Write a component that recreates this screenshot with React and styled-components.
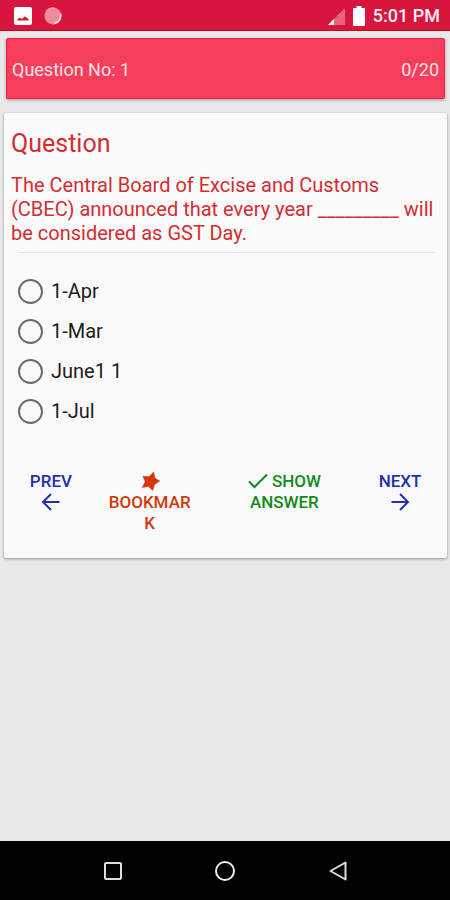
import React, { useState } from "react";
import styled, { createGlobalStyle } from "styled-components";

const GlobalStyle = createGlobalStyle`
  * {
    box-sizing: border-box;
  }

  body {
    margin: 0;
    background: #e8e8e8;
    font-family: Roboto, "Liberation Sans", sans-serif;
  }

  p, h1 {
    margin: 0;
  }
`;

const Screen = styled.div`
  display: flex;
  flex-direction: column;
  min-height: 100vh;
`;

const StatusBar = styled.header`
  display: flex;
  align-items: center;
  justify-content: space-between;
  height: 31px;
  padding: 2px 10px 0 14px;
  background: #d8153c;
  border-bottom: 1px solid #d0020f;
  color: #fff;
`;

const StatusGroup = styled.div`
  display: flex;
  align-items: center;
  gap: ${({ $gap }) => $gap};
`;

const Clock = styled.time`
  font-size: 18px;
  line-height: 24px;
  font-weight: 500;
  color: #fff0f2;
`;

const Content = styled.main`
  flex: 1;
  display: flex;
  flex-direction: column;
  gap: 14px;
  padding: 7px 3px 0 4px;
`;

const Summary = styled.section`
  display: flex;
  align-items: center;
  justify-content: space-between;
  height: 61px;
  margin: 0 2px;
  padding: 2px 5px 0;
  border: 1px solid #ee2450;
  border-radius: 2px;
  background: #f73d5c;
  box-shadow: 0 1px 3px rgba(0, 0, 0, 0.35);
  font-size: 18px;
  line-height: 24px;
  color: #ffe3e6;
`;

const Card = styled.section`
  padding: 16px 7px 24px;
  border-radius: 2px;
  background: #fafafa;
  box-shadow: 0 1px 3px rgba(0, 0, 0, 0.4);
`;

const Title = styled.h1`
  font-size: 25px;
  line-height: 30px;
  font-weight: 400;
  color: #d22d32;
`;

const QuestionText = styled.p`
  margin-top: 14px;
  font-size: 20px;
  line-height: 24px;
  color: #d22d32;
`;

const Divider = styled.hr`
  height: 1px;
  margin: 7px 5px 0 7px;
  border: 0;
  background: #e4e4e4;
`;

const Options = styled.div`
  display: flex;
  flex-direction: column;
  padding: 18px 7px 0;
`;

const Option = styled.label`
  display: flex;
  align-items: center;
  gap: 8px;
  height: 40px;
  font-size: 20px;
  line-height: 24px;
  color: #1c1c1c;
`;

const Radio = styled.input`
  appearance: none;
  width: 25px;
  height: 25px;
  margin: 0;
  border: 2px solid #6a6a6a;
  border-radius: 50%;

  &:checked {
    background: #d8153c;
    box-shadow: inset 0 0 0 4px #fafafa;
  }
`;

const Actions = styled.div`
  display: grid;
  grid-template-columns: 80fr 118fr 152fr 80fr;
  justify-items: center;
  align-items: start;
  margin-top: 40px;
`;

const ActionButton = styled.button`
  max-width: 100px;
  padding: 0 8px;
  border: 0;
  background: none;
  font-family: inherit;
  font-size: 17px;
  line-height: 21px;
  font-weight: 500;
  color: ${({ $color }) => $color};
  overflow-wrap: anywhere;
  cursor: pointer;

  svg {
    vertical-align: ${({ $inline }) => ($inline ? "-4px" : "top")};
    display: ${({ $inline }) => ($inline ? "inline" : "block")};
    margin: ${({ $inline }) => ($inline ? "0" : "0 auto")};
  }
`;

const NavBar = styled.nav`
  display: grid;
  grid-template-columns: repeat(3, 1fr);
  align-items: center;
  height: 59px;
  padding: 0 12.5%;
  background: #000;
`;

const NavButton = styled.button`
  display: flex;
  justify-content: center;
  padding: 0;
  border: 0;
  background: none;
  cursor: pointer;
`;

const PictureIcon = () => (
  <svg width="18" height="18" viewBox="0 0 18 18">
    <rect width="18" height="18" rx="2" fill="#fff" />
    <path d="M3.5 13.5v-1.5l2.5-1.5 2.2 1.5 2.6-2.8 3.7 2.8v1.5z" fill="#c9202f" />
  </svg>
);

const SyncIcon = () => (
  <svg width="18" height="18" viewBox="0 0 18 18">
    <circle cx="9" cy="9" r="8.5" fill="#ee8a9c" />
    <path d="M16.4 7a8 8 0 0 1-6.4 9.6" fill="none" stroke="#ffe0e2" strokeWidth="1.8" />
    <path d="M2 5a8 8 0 0 1 9-3.6" fill="none" stroke="#f4a9b5" strokeWidth="1.2" />
  </svg>
);

const SignalIcon = () => (
  <svg width="17" height="17" viewBox="0 0 17 17">
    <path d="M17 0v17H0z" fill="#e8647d" />
    <path d="M6 11v6H0z" fill="#fff" />
  </svg>
);

const BatteryIcon = () => (
  <svg width="12" height="20" viewBox="0 0 12 20">
    <path d="M3.5 0h5v2H11a1 1 0 0 1 1 1v16a1 1 0 0 1-1 1H1a1 1 0 0 1-1-1V3a1 1 0 0 1 1-1h2.5z" fill="#fff" />
  </svg>
);

const ArrowIcon = ({ right }) => (
  <svg width="20" height="20" viewBox="0 0 20 20" fill="none" stroke="currentColor" strokeWidth="2">
    <path d={right ? "M1.5 10h16M10 2l8 8-8 8" : "M18.5 10h-16M10 2l-8 8 8 8"} />
  </svg>
);

const StarIcon = () => (
  <svg width="20" height="21" viewBox="0 0 20 21">
    <path
      d="M13.6 1L14.8 7.1 19.7 10 14.6 13.6 12.7 19.5 8.6 15.5 2.4 16.4 5.2 10.7 3 5.2 9 5.8z"
      fill="currentColor"
      stroke="currentColor"
      strokeWidth="0.6"
      strokeLinejoin="round"
    />
  </svg>
);

const CheckIcon = () => (
  <svg width="20" height="20" viewBox="0 0 20 20" fill="none" stroke="currentColor" strokeWidth="2">
    <path d="M1 10.5l5.5 5.5L19 3.5" />
  </svg>
);

const answers = ["1-Apr", "1-Mar", "June1 1", "1-Jul"];

function App() {
  const [selected, setSelected] = useState(null);

  return (
    <>
      <GlobalStyle />
      <Screen>
        <StatusBar>
          <StatusGroup $gap="12px">
            <PictureIcon />
            <SyncIcon />
          </StatusGroup>
          <StatusGroup $gap="8px">
            <SignalIcon />
            <BatteryIcon />
            <Clock>5:01 PM</Clock>
          </StatusGroup>
        </StatusBar>

        <Content>
          <Summary>
            <p>Question No: 1</p>
            <p>0/20</p>
          </Summary>

          <Card>
            <Title>Question</Title>
            <QuestionText>
              The Central Board of Excise and Customs (CBEC) announced that
              every year _________ will be considered as GST Day.
            </QuestionText>
            <Divider />

            <Options role="radiogroup" aria-label="Answers">
              {answers.map((answer) => (
                <Option key={answer}>
                  <Radio
                    type="radio"
                    name="answer"
                    checked={selected === answer}
                    onChange={() => setSelected(answer)}
                  />
                  {answer}
                </Option>
              ))}
            </Options>

            <Actions>
              <ActionButton $color="#2030b0">
                PREV
                <ArrowIcon />
              </ActionButton>
              <ActionButton $color="#d2380c">
                <StarIcon />
                BOOKMARK
              </ActionButton>
              <ActionButton $color="#128a1c" $inline>
                <CheckIcon /> SHOW ANSWER
              </ActionButton>
              <ActionButton $color="#2030b0">
                NEXT
                <ArrowIcon right />
              </ActionButton>
            </Actions>
          </Card>
        </Content>

        <NavBar>
          <NavButton aria-label="Recent apps">
            <svg width="18" height="18" viewBox="0 0 18 18" fill="none" stroke="#ddd" strokeWidth="2">
              <rect x="1" y="1" width="16" height="16" rx="1" />
            </svg>
          </NavButton>
          <NavButton aria-label="Home">
            <svg width="20" height="20" viewBox="0 0 20 20" fill="none" stroke="#eee" strokeWidth="2">
              <circle cx="10" cy="10" r="9" />
            </svg>
          </NavButton>
          <NavButton aria-label="Back">
            <svg width="18" height="20" viewBox="0 0 18 20" fill="none" stroke="#ddd" strokeWidth="2" strokeLinejoin="round">
              <path d="M16.5 1.5v17L1.5 10z" />
            </svg>
          </NavButton>
        </NavBar>
      </Screen>
    </>
  );
}

export default App;
